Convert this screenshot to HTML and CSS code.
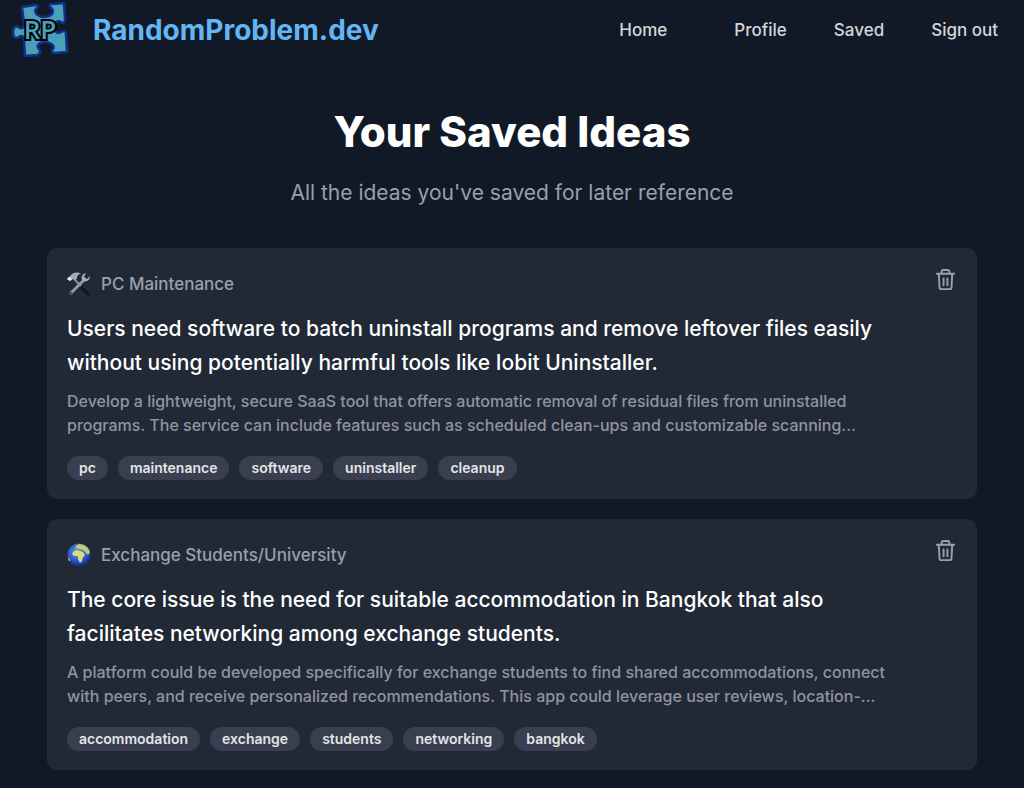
FILE: index.html
```html
<!DOCTYPE html>
<html lang="en">

<head>
    <meta charset="UTF-8">
    <meta name="viewport" content="width=device-width, initial-scale=1.0">
    <title>RandomProblem.dev - Saved Ideas</title>
    <link rel="stylesheet" href="styles.css">
</head>

<body>
    <header class="navbar">
        <a class="brand" href="#">
            <!-- Puzzle piece logo -->
            <svg class="logo" viewBox="0 0 60 60" aria-hidden="true">
                <path d="M12 7 L25 5 C28 5 29 7 27 8 C24 10 25 14 29 16 C33 18 39 17 42 14 C44 11 43 9 40 7 C39 5 40 4 42 4 L54 3 L55 19 C55 23 53 24 51 22 C48 20 44 22 44 27 C44 32 48 34 51 32 C54 30 56 31 56 34 L57 52 L45 53 C42 53 41 51 43 49 C45 46 41 42 35 42 C29 42 26 46 29 49 C31 52 30 54 27 55 L15 56 L14 39 C14 36 11 35 9 37 C5 39 3 37 3 32 C3 27 6 25 10 28 C13 29 14 27 14 24 Z" fill="#4a9fbb" stroke="#10308a" stroke-width="2.500" stroke-linejoin="round" />
                <text class="logo-text" x="30" y="39" text-anchor="middle">RP</text>
            </svg>
            <span class="brand-name">RandomProblem.dev</span>
        </a>
        <nav class="nav-links">
            <a class="home-link" href="#">Home</a>
            <a href="#">Profile</a>
            <a href="#">Saved</a>
            <button type="button">Sign out</button>
        </nav>
    </header>

    <main class="page">
        <h1>Your Saved Ideas</h1>
        <p class="subtitle">All the ideas you've saved for later reference</p>

        <div class="idea-list">
            <article class="idea-card">
                <div class="idea-body">
                    <div class="category">
                        <!-- Hammer and wrench -->
                        <svg class="category-icon" viewBox="0 0 24 24" aria-hidden="true">
                            <path d="M13 14 L21 22" stroke="#15171c" stroke-width="3.500" stroke-linecap="round" />
                            <path d="M8 8 L14 14" stroke="#8d9298" stroke-width="2" />
                            <path d="M0 7 L4 3 C7 0 11 0 14 2 C11 2 10 4 10 6 L8 9 L6 7 L3 9 Z" fill="#a4acb4" />
                            <path d="M0 7 L2 5 L5 7 L3 9 Z" fill="#e4edf2" />
                            <path d="M4 21 L17 8" stroke="#96999e" stroke-width="3" stroke-linecap="round" />
                            <path d="M19 1 C15 2 14 5 15 8 C18 11 23 9 23 4 L20 7 L17 5 Z" fill="#a5adb6" />
                            <circle cx="4" cy="21" r="1" fill="#353a42" />
                        </svg>
                        <span>PC Maintenance</span>
                    </div>
                    <h2>Users need software to batch uninstall programs and remove leftover files easily without using potentially harmful tools like Iobit Uninstaller.</h2>
                    <p class="description">Develop a lightweight, secure SaaS tool that offers automatic removal of residual files from uninstalled programs. The service can include features such as scheduled clean-ups and customizable scanning...</p>
                    <ul class="tags">
                        <li>pc</li>
                        <li>maintenance</li>
                        <li>software</li>
                        <li>uninstaller</li>
                        <li>cleanup</li>
                    </ul>
                </div>
                <button class="delete-button" type="button" aria-label="Delete idea">
                    <svg viewBox="0 0 24 24" aria-hidden="true">
                        <path d="M3 6h18M8 6V3.500a1.500 1.500 0 0 1 1.500-1.500h5a1.500 1.500 0 0 1 1.500 1.500V6M5 6l.7 14a2 2 0 0 0 2 2h8.600a2 2 0 0 0 2-2L19 6M10 11v7M14 11v7" />
                    </svg>
                </button>
            </article>

            <article class="idea-card">
                <div class="idea-body">
                    <div class="category">
                        <!-- Globe -->
                        <svg class="category-icon" viewBox="0 0 24 24" aria-hidden="true">
                            <defs>
                                <radialGradient id="ocean" cx="45%" cy="35%" r="65%">
                                    <stop offset="0" stop-color="#5d9df0" />
                                    <stop offset="0.6" stop-color="#2c5bd0" />
                                    <stop offset="1" stop-color="#14267c" />
                                </radialGradient>
                            </defs>
                            <circle cx="12" cy="12" r="11.500" fill="url(#ocean)" />
                            <path d="M6 9 L9 7 L13 8 L16 9 L18 12 L16 14 L15 18 L13 20 L11 16 L11 13 L7 13 L5 11 Z" fill="#dfda78" />
                            <path d="M8 6 L9 3 L12 1 L17 2 L21 5 L23 9 L21 12 L18 9 L16 7 L12 6 L10 5 Z" fill="#c3cc6d" />
                            <path d="M1 14 L3 16 L3 18 L2 18 Z" fill="#e0cf4d" />
                        </svg>
                        <span>Exchange Students/University</span>
                    </div>
                    <h2>The core issue is the need for suitable accommodation in Bangkok that also facilitates networking among exchange students.</h2>
                    <p class="description">A platform could be developed specifically for exchange students to find shared accommodations, connect with peers, and receive personalized recommendations. This app could leverage user reviews, location-...</p>
                    <ul class="tags">
                        <li>accommodation</li>
                        <li>exchange</li>
                        <li>students</li>
                        <li>networking</li>
                        <li>bangkok</li>
                    </ul>
                </div>
                <button class="delete-button" type="button" aria-label="Delete idea">
                    <svg viewBox="0 0 24 24" aria-hidden="true">
                        <path d="M3 6h18M8 6V3.500a1.500 1.500 0 0 1 1.500-1.500h5a1.500 1.500 0 0 1 1.500 1.500V6M5 6l.7 14a2 2 0 0 0 2 2h8.600a2 2 0 0 0 2-2L19 6M10 11v7M14 11v7" />
                    </svg>
                </button>
            </article>
        </div>
    </main>
</body>

</html>
```
FILE: styles.css
```css
* {
    box-sizing: border-box;
}

body {
    margin: 0;
    background-color: #121926;
    color: white;
    font-family: Inter, "Liberation Sans", sans-serif;
}

h1,
h2,
p,
ul {
    margin: 0;
    padding: 0;
}

button {
    padding: 0;
    border: none;
    background: none;
    font: inherit;
    color: inherit;
    cursor: pointer;
}

/* Top navigation */
.navbar {
    display: flex;
    justify-content: space-between;
    align-items: center;
    padding: 0 26px 0 10px;
}

.brand {
    display: flex;
    align-items: center;
    gap: 23px;
    text-decoration: none;
}

.logo {
    width: 60px;
    height: 60px;
}

.logo-text {
    font-family: "Open Sans", sans-serif;
    font-size: 26px;
    font-weight: 600;
    fill: #4a9fbb;
    stroke: black;
    stroke-width: 4px;
    paint-order: stroke;
}

.brand-name {
    color: #62b6f5;
    font-size: 28px;
    font-weight: 700;
}

.nav-links {
    display: flex;
    gap: 47px;
    color: #d2d5da;
    font-size: 17px;
    font-weight: 500;
}

.nav-links a {
    color: inherit;
    text-decoration: none;
}

.nav-links .home-link {
    margin-right: 20px;
}

/* Page heading */
.page {
    padding: 44px 47px 18px;
}

h1 {
    font-size: 42px;
    font-weight: 800;
    line-height: 56px;
    text-align: center;
}

.subtitle {
    margin-top: 16px;
    color: #9a9fac;
    font-size: 21px;
    line-height: 34px;
    text-align: center;
}

/* Saved ideas */
.idea-list {
    display: flex;
    flex-direction: column;
    gap: 20px;
    margin-top: 38px;
}

.idea-card {
    display: flex;
    align-items: flex-start;
    justify-content: space-between;
    gap: 32px;
    padding: 20px 20px 19px;
    border-radius: 10px;
    background-color: #222936;
}

.idea-body {
    flex: 1;
}

.category {
    display: flex;
    align-items: center;
    gap: 10px;
    height: 32px;
    color: #9a9fac;
    font-size: 17px;
    font-weight: 500;
}

.category-icon {
    width: 24px;
    height: 24px;
    fill: none;
}

h2 {
    margin-top: 12px;
    font-size: 21px;
    font-weight: 500;
    line-height: 34px;
}

.description {
    margin-top: 9px;
    color: #9094a1;
    font-size: 16px;
    font-weight: 500;
    line-height: 24px;
}

.tags {
    display: flex;
    flex-wrap: wrap;
    gap: 10px;
    margin-top: 19px;
    list-style: none;
}

.tags li {
    padding: 0 12px;
    border-radius: 12px;
    background-color: #393f4e;
    color: #e3e5e9;
    font-size: 14px;
    font-weight: 600;
    line-height: 24px;
}

.delete-button svg {
    display: block;
    width: 23px;
    height: 23px;
    fill: none;
    stroke: #9a9fac;
    stroke-width: 2;
    stroke-linecap: round;
    stroke-linejoin: round;
}
```
